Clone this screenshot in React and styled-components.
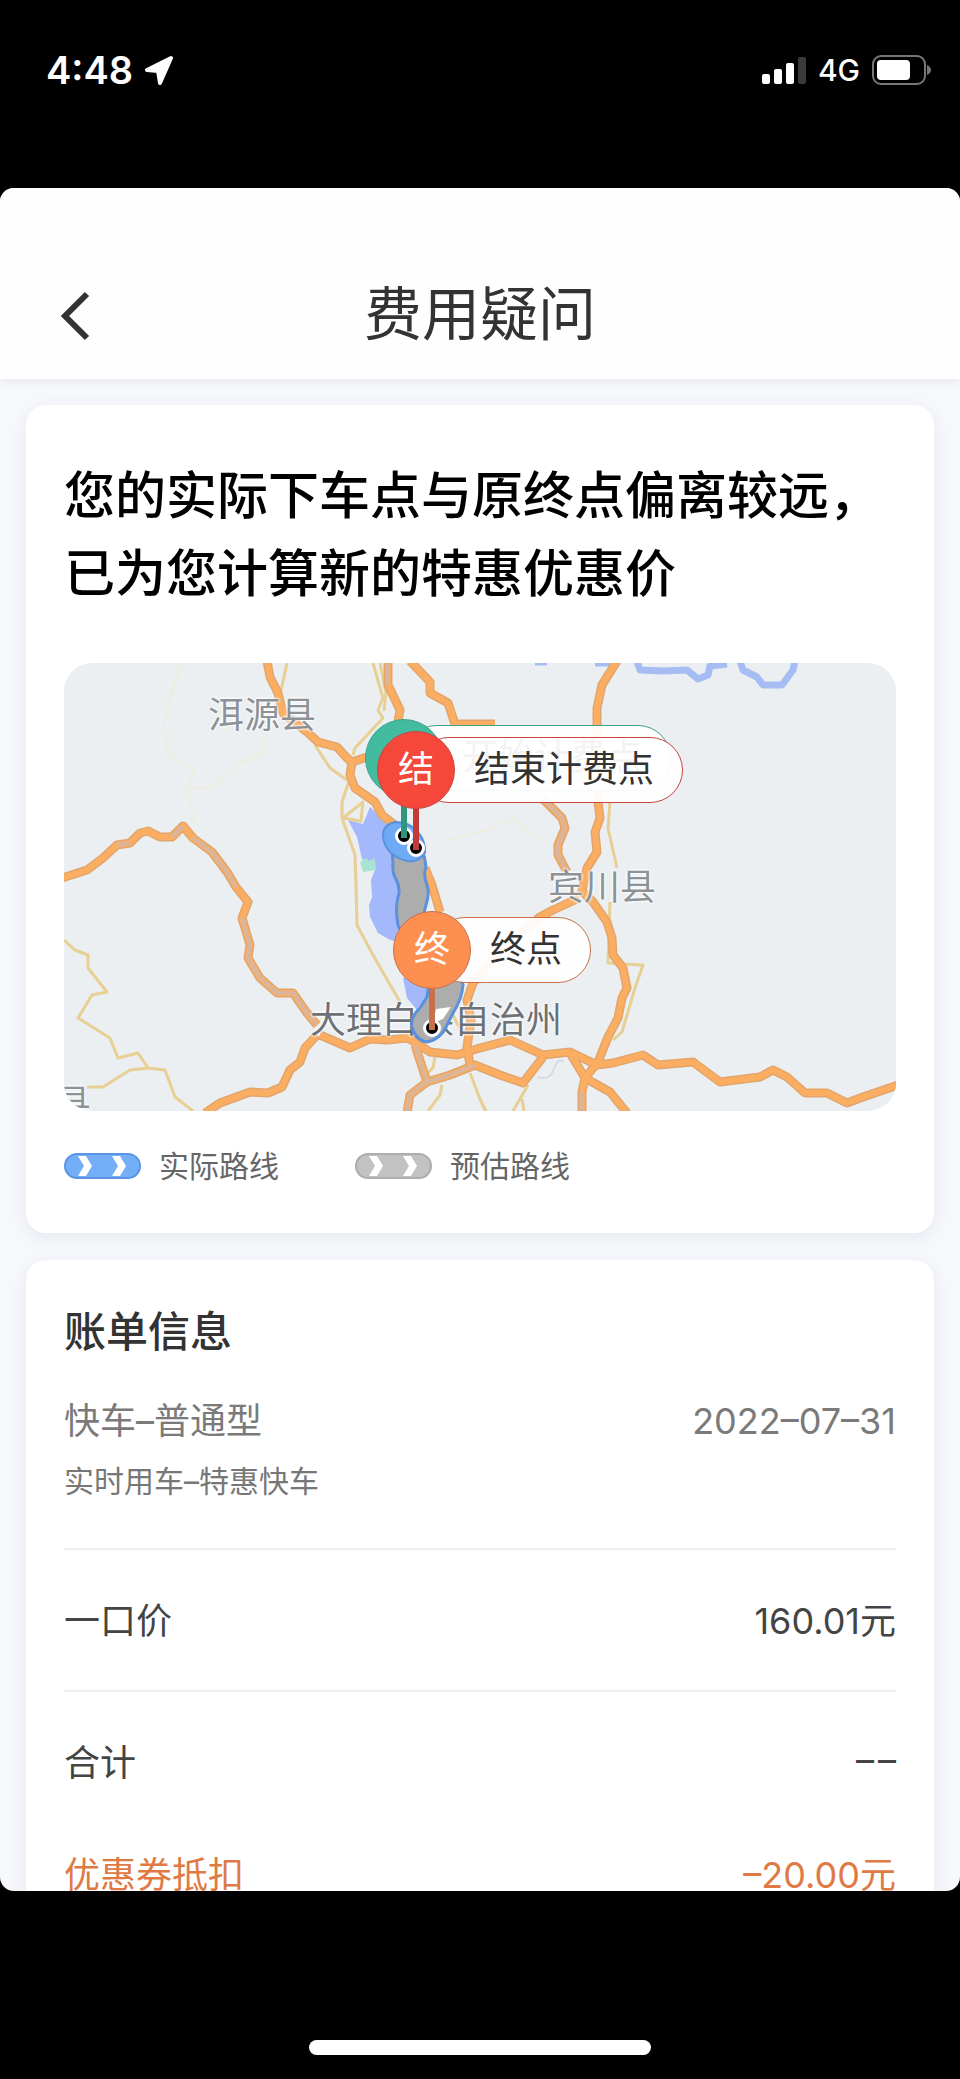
import styled, { createGlobalStyle } from 'styled-components';

const GlobalStyle = createGlobalStyle`
	* {
		box-sizing: border-box;
	}

	body {
		margin: 0;
		background: #000;
		font-family: Inter, 'Noto Sans CJK SC', sans-serif;
	}

	h1, h2, p, dl, dt, dd {
		margin: 0;
		font-weight: 400;
	}
`;

const Phone = styled.div`
	display: flex;
	flex-direction: column;
	height: 100vh;
	background: #000;
`;

const StatusBar = styled.div`
	flex: none;
	display: flex;
	justify-content: space-between;
	align-items: center;
	height: 188px;
	padding: 0 28px 48px 46px;
	color: #fff;
`;

const StatusGroup = styled.div`
	display: flex;
	align-items: center;
	gap: ${({ $gap }) => $gap}px;
`;

const Time = styled.span`
	font-size: 38px;
	font-weight: 600;
`;

const Network = styled.span`
	font-size: 30px;
	font-weight: 500;
`;

const Screen = styled.div`
	flex: 1;
	min-height: 0;
	display: flex;
	flex-direction: column;
	overflow: hidden;
	border-radius: 14px;
	background: #f6f8fc;
`;

const Header = styled.header`
	flex: none;
	display: grid;
	grid-template-columns: 58px 1fr 58px;
	align-items: center;
	height: 191px;
	padding: 60px 46px 0;
	background: #fefefe;
	box-shadow: 0 2px 10px rgba(0, 0, 0, 0.07);
	z-index: 1;
`;

const BackButton = styled.button`
	display: flex;
	align-items: center;
	justify-content: center;
	height: 60px;
	padding: 5px 0 0;
	border: 0;
	background: none;
	color: #333;
	cursor: pointer;
`;

const Title = styled.h1`
	font-size: 58px;
	line-height: 72px;
	text-align: center;
	color: #333;
`;

const Content = styled.main`
	flex: 1;
	min-height: 0;
	padding: 26px 26px 0;
	overflow-y: auto;
	scrollbar-width: none;
`;

const Card = styled.section`
	margin-bottom: 27px;
	padding: ${({ $top }) => $top}px 38px 45px;
	border-radius: 20px;
	background: #fff;
	box-shadow: 0 4px 18px rgba(40, 50, 80, 0.08);
`;

const Notice = styled.h2`
	margin-bottom: 50px;
	font-size: 51px;
	font-weight: 500;
	line-height: 78px;
	color: #000;
`;

const MapBox = styled.div`
	position: relative;
	height: 448px;
	overflow: hidden;
	border-radius: 28px;
	background: #ebeff2;

	svg {
		display: block;
	}
`;

const Place = styled.span`
	position: absolute;
	left: ${({ $x }) => $x}px;
	top: ${({ $y }) => $y}px;
	font-size: 36px;
	line-height: 44px;
	white-space: nowrap;
	color: ${({ $color }) => $color || '#8d9296'};
	text-shadow: 0 0 3px #fff, 0 0 3px #fff, 0 0 2px #fff;
`;

const Pin = styled.div`
	position: absolute;
	left: ${({ $x }) => $x}px;
	top: ${({ $y }) => $y}px;
	font-size: 36px;
	line-height: 44px;
	white-space: nowrap;
`;

const PinLabel = styled.div`
	position: absolute;
	left: 0;
	top: -111px;
	display: flex;
	align-items: center;
	height: 66px;
	padding: 0 28px 2px 57px;
	border: 1px solid ${({ $color }) => $color};
	border-radius: 33px;
	background: rgba(255, 255, 255, 0.94);
	color: #333;
`;

const PinStem = styled.div`
	position: absolute;
	left: -3px;
	top: -44px;
	width: 6px;
	height: 46px;
	background: ${({ $color }) => $color};
`;

const PinDot = styled.div`
	position: absolute;
	left: -9px;
	top: -9px;
	width: 18px;
	height: 18px;
	border: 3px solid #fff;
	border-radius: 50%;
	background: #000;
`;

const PinHead = styled.div`
	position: absolute;
	left: -39px;
	top: -117px;
	display: flex;
	align-items: center;
	justify-content: center;
	width: 78px;
	height: 78px;
	padding-bottom: 2px;
	border: 1px solid ${({ $color }) => $color};
	border-radius: 50%;
	background: ${({ $fill }) => $fill};
	color: #fff;
`;

const Legend = styled.div`
	display: flex;
	gap: 76px;
	margin-top: 33px;
`;

const LegendItem = styled.div`
	display: flex;
	align-items: center;
	gap: 18px;
	font-size: 30px;
	line-height: 44px;
	color: #666;
`;

const BillTitle = styled.h2`
	font-size: 42px;
	font-weight: 500;
	line-height: 60px;
	color: #333;
`;

const Trip = styled.div`
	display: flex;
	justify-content: space-between;
	margin-top: 32px;
	font-size: 36px;
	line-height: 54px;
	color: #7a7a7a;
`;

const TripType = styled.p`
	margin-top: 11px;
	padding-bottom: 45px;
	font-size: 30px;
	line-height: 44px;
	color: #777;
`;

const BillRow = styled.div`
	display: flex;
	justify-content: space-between;
	align-items: center;
	height: ${({ $short }) => ($short ? 84 : 142)}px;
	padding-bottom: 4px;
	border-top: ${({ $line }) => ($line ? '2px solid #efefef' : '0')};
	font-size: 36px;
	color: ${({ $discount }) => ($discount ? '#e07a45' : '#444')};
`;

const NoTotal = styled.span`
	display: flex;
	gap: 4px;
`;

const HomeArea = styled.div`
	flex: none;
	display: flex;
	align-items: flex-end;
	justify-content: center;
	height: 188px;
	padding-bottom: 24px;
`;

const HomeIndicator = styled.div`
	width: 342px;
	height: 15px;
	border-radius: 8px;
	background: #fff;
`;

const LocationIcon = () => (
	<svg width="30" height="30" viewBox="0 0 30 30" fill="#fff" stroke="#fff" strokeWidth="4" strokeLinejoin="round" aria-hidden="true">
		<path d="M27 3L3 15L14 16L16 28Z" />
	</svg>
);

const SignalIcon = () => (
	<svg width="44" height="28" viewBox="0 0 44 28" fill="#fff" aria-hidden="true">
		<rect x="0" y="18" width="8" height="10" rx="2" />
		<rect x="12" y="13" width="8" height="15" rx="2" />
		<rect x="24" y="7" width="8" height="21" rx="2" />
		<rect x="36" y="1" width="8" height="27" rx="2" fill="#3a3a3a" />
	</svg>
);

const BatteryIcon = () => (
	<svg width="60" height="30" viewBox="0 0 60 30" aria-hidden="true">
		<rect x="1" y="1" width="52" height="28" rx="8" fill="none" stroke="#777" strokeWidth="2" />
		<rect x="5" y="5" width="33" height="20" rx="4" fill="#fff" />
		<path d="M55 10q4 2 4 5t-4 5z" fill="#777" />
	</svg>
);

const RouteIcon = ({ fill, stroke }) => (
	<svg width="77" height="26" viewBox="0 0 77 26" aria-hidden="true">
		<rect x="1" y="1" width="75" height="24" rx="12" fill={fill} stroke={stroke} strokeWidth="2" />
		<path d="M14 3h8l6 10l-6 10h-8l6-10zM48 3h8l6 10l-6 10h-8l6-10z" fill="#fff" />
	</svg>
);

const ROADS = [
	'M-2 215L23 207L39 195L53 182L66 180L76 170L84 168L96 174L108 174L119 163L129 175L148 189L163 209L172 224L184 239L178 255L186 282L184 295L196 315L213 330L229 330L243 350L253 362',
	'M256 372L286 385L306 376L323 377L343 375L356 381',
	'M253 372L241 385L236 399L226 407L218 424L204 430L186 429L156 440L141 450',
	'M203 -2L206 14L214 30L219 50L243 69L254 79L273 84L283 95L288 99L286 112L291 125L311 139L318 152L331 162',
	'M288 99L303 94',
	'M324 -2L324 22L336 47L334 58',
	'M346 -2L366 19L366 30L384 40L391 61L431 61',
	'M553 -2L538 22L533 45L533 62L534 139L536 155L531 169L533 189L523 205L518 228L529 239L543 259L548 275L549 292L559 305L563 325L558 335L554 355L544 374L534 399L521 415L518 429L518 450',
	'M478 135L498 155L501 165L494 182L494 192L503 209',
	'M515 235L489 247L476 254L440 285L409 320L403 337L407 357L403 384L406 402',
	'M343 374L366 389L393 392L416 385L446 377L479 392L506 389L533 402L549 400L579 392L594 402L629 399L656 419L696 414L709 407L723 414L741 430L763 430L783 440L799 434L834 422',
	'M351 382L363 419L346 432L343 450',
	'M363 419L386 412L411 402L436 412L459 420L479 394',
	'M506 390L521 415L546 429L563 450',
	'M361 205L368 222L376 249',
];

const TOLL_ROADS = [
	'M129 175L148 189L163 209L172 224M178 255L186 282L184 295L196 315L213 330L229 330L243 350L253 362',
	'M53 182L66 180M108 174L119 163',
	'M478 135L498 155L501 165L494 182L494 192L503 209',
	'M351 382L363 419L346 432L343 450M363 419L386 412L411 402',
	'M518 429L518 450M324 0L324 22',
];

const LANES = [
	'M0 277L11 287L24 292L24 305L43 329L28 332L14 355L46 375L54 395L74 390L84 405L101 407L111 434L129 448',
	'M84 405L66 407L39 424L23 424',
	'M223 0L216 32',
	'M309 0L319 35L314 47L319 55L291 85L289 92',
	'M316 0L322 30L320 48',
	'M286 115L278 139L278 155L291 192L292 222L293 262L309 292L336 339',
	'M251 82L266 105L283 117',
	'M279 155L299 139L297 158L279 155',
	'M546 139L544 165L553 205M546 239L544 300L579 302L571 325L558 369L549 377',
	'M378 422L376 432L364 448M371 393L369 405L361 412',
	'M406 410L416 436L421 448M416 436L422 448',
	'M464 422L449 448M458 436L460 448',
	'M388 350L394 362L402 372',
];

const ChinaMap = () => (
	<svg width="832" height="448" viewBox="0 0 832 448" fill="none" strokeLinejoin="round" aria-hidden="true">
		<g stroke="#eeede4" strokeWidth="3">
			<path d="M116 0L100 60L104 90L130 108L124 126L150 124L176 100L200 90L200 72" />
			<path d="M124 126L130 160M380 178L420 168L450 155L480 180" />
		</g>
		<g stroke="#a6bdf4" strokeWidth="7">
			<path d="M471 -1h12M531 0h15" />
			<path d="M573 -2L576 7L599 8L623 7L634 16L644 12L646 3L663 1" />
			<path d="M676 -2L679 7L693 14L699 22L718 22L729 7L731 -2" />
		</g>
		<path
			d="M284 157L299 161L306 144L323 160L328 190L336 237L334 279L326 277L314 270L306 254L305 242L308 234L307 217L311 207L298 196L293 174Z"
			fill="#a3b9fb"
		/>
		<path d="M339 315L343 335L353 347L366 332L366 310Z" fill="#a3b9fb" />
		<path d="M296 199l6-4l3 3l6-3l1 12l-13 2z" fill="#a9e3d4" />
		<path d="M474 414Q486 418 490 406T499 399" stroke="#d5dae5" strokeWidth="2" />
		{LANES.map((d) => (
			<path key={d} d={d} stroke="#e8cf93" strokeWidth="3" />
		))}
		{ROADS.map((d) => (
			<path key={d} d={d} stroke="#e2a56c" strokeWidth="9" />
		))}
		{ROADS.map((d) => (
			<path key={d} d={d} stroke="#fbae61" strokeWidth="6" />
		))}
		{TOLL_ROADS.map((d) => (
			<path key={d} d={d} stroke="#dab59c" strokeWidth="4" />
		))}
	</svg>
);

const RouteSvg = styled.svg`
	position: absolute;
	left: 0;
	top: 0;
`;

const Route = () => (
	<RouteSvg width="832" height="448" viewBox="0 0 832 448" strokeLinejoin="round" aria-hidden="true">
		<path
			d="M328 187L329 200Q328 210 332 216Q337 226 334 234Q331 246 334 262L350 300L366 314L363 334L356 345Q346 354 348 364Q352 378 363 379Q372 378 380 368L389 350Q398 336 399 322L394 306L360 262Q359 250 362 242Q366 230 363 222Q359 212 362 204Q361 194 358 187Z"
			fill="#adadad"
			stroke="#5a90dc"
			strokeWidth="3"
		/>
		<path d="M372 346l15-2l-8 12l-10 4z" fill="#fff" />
		<path
			d="M319 172Q319 162 331 159Q345 159 353 168Q362 178 361 190Q354 200 344 198Q335 197 327 190Q319 182 319 172Z"
			fill="#6fabf4"
			stroke="#5a90dc"
			strokeWidth="2"
		/>
	</RouteSvg>
);

const MapPin = ({ x, y, short, label, fill, color, stem }) => (
	<Pin $x={x} $y={y}>
		<PinLabel $color={color}>{label}</PinLabel>
		<PinDot />
		<PinStem $color={stem} />
		<PinHead $fill={fill} $color={color}>
			{short}
		</PinHead>
	</Pin>
);

const BILL = [
	{ name: '一口价', value: '160.01元', line: true },
	{ name: '合计', line: true },
	{ name: '优惠券抵扣', value: '–20.00元', short: true, discount: true },
];

const App = () => (
	<Phone>
		<GlobalStyle />
		<StatusBar>
			<StatusGroup $gap={11}>
				<Time>4:48</Time>
				<LocationIcon />
			</StatusGroup>
			<StatusGroup $gap={12}>
				<SignalIcon />
				<Network>4G</Network>
				<BatteryIcon />
			</StatusGroup>
		</StatusBar>
		<Screen>
			<Header>
				<BackButton type="button" aria-label="返回">
					<svg width="32" height="50" viewBox="0 0 32 50" fill="none" stroke="currentColor" strokeWidth="6">
						<path d="M28 3L6 25L28 47" />
					</svg>
				</BackButton>
				<Title>费用疑问</Title>
			</Header>
			<Content>
				<Card $top={52}>
					<Notice>
						您的实际下车点与原终点偏离较远，
						<br />
						已为您计算新的特惠优惠价
					</Notice>
					<MapBox>
						<ChinaMap />
						<Place $x={144} $y={30}>洱源县</Place>
						<Place $x={484} $y={202}>宾川县</Place>
						<Place $x={246} $y={335} $color="#6c7175">大理白族自治州</Place>
						<Place $x={-9} $y={418}>县</Place>
						<Route />
						<MapPin x={340} y={173} short="开" label="开始计费点" fill="#42bb9e" color="#3aa489" stem="#30977b" />
						<MapPin x={352} y={185} short="结" label="结束计费点" fill="#f5483a" color="#c9433f" stem="#c23b38" />
						<MapPin x={368} y={365} short="终" label="终点" fill="#fd8f51" color="#c9704a" stem="#c9704a" />
					</MapBox>
					<Legend>
						<LegendItem>
							<RouteIcon fill="#74aef6" stroke="#5b96e6" />
							实际路线
						</LegendItem>
						<LegendItem>
							<RouteIcon fill="#c2c2c2" stroke="#adadad" />
							预估路线
						</LegendItem>
					</Legend>
				</Card>
				<Card $top={42}>
					<BillTitle>账单信息</BillTitle>
					<Trip>
						<span>快车–普通型</span>
						<time dateTime="2022-07-31">2022–07–31</time>
					</Trip>
					<TripType>实时用车–特惠快车</TripType>
					<dl>
						{BILL.map(({ name, value, line, short, discount }) => (
							<BillRow key={name} $line={line} $short={short} $discount={discount}>
								<dt>{name}</dt>
								<dd>
									{value || (
										<NoTotal>
											<span>–</span>
											<span>–</span>
										</NoTotal>
									)}
								</dd>
							</BillRow>
						))}
					</dl>
				</Card>
			</Content>
		</Screen>
		<HomeArea>
			<HomeIndicator />
		</HomeArea>
	</Phone>
);

export default App;
